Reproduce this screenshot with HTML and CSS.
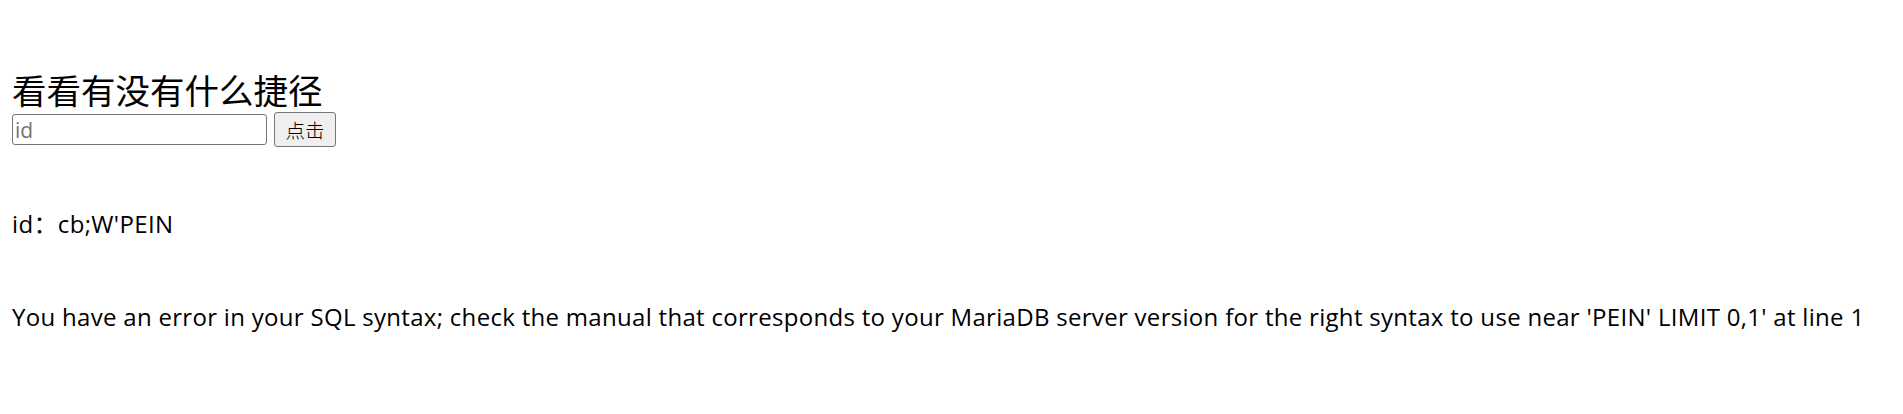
FILE: index.html
```html
<!DOCTYPE html>
<html lang="zh-CN">
<head>
<meta charset="utf-8">
<title>看看有没有什么捷径</title>
<link rel="stylesheet" href="styles.css">
</head>
<body>
<div class="page">
  <div class="title">看看有没有什么捷径</div>
  <form class="search">
    <input class="search-input" type="text" name="id" placeholder="id">
    <button class="search-btn" type="button">点击</button>
  </form>
  <p class="result">id：cb;W'PEIN</p>
  <p class="error">You have an error in your SQL syntax; check the manual that corresponds to your MariaDB server version for the right syntax to use near 'PEIN' LIMIT 0,1' at line 1</p>
</div>
</body>
</html>
```

FILE: styles.css
```css
html, body {
  margin: 0;
  padding: 0;
  background: #ffffff;
}
.page {
  padding: 69px 0 0 12px;
  font-family: "Open Sans", "Noto Sans CJK SC", sans-serif;
  color: #000;
}
.title {
  font-family: "Noto Sans CJK SC", sans-serif;
  font-size: 34.5px;
  line-height: 41px;
  height: 43px;
  white-space: nowrap;
}
.search {
  display: flex;
  align-items: center;
  gap: 7px;
  height: 35px;
  margin: 0;
}
.search-input {
  box-sizing: border-box;
  width: 255px;
  height: 31px;
  margin: 0;
  padding: 0 2px;
  border: 1px solid #767676;
  border-radius: 3px;
  font-family: "Open Sans", sans-serif;
  font-size: 21px;
  color: #000;
  background: #fff;
}
.search-input::placeholder {
  color: #757575;
}
.search-btn {
  box-sizing: border-box;
  width: 62px;
  height: 35px;
  margin: 0;
  padding: 0;
  border: 1px solid #767676;
  border-radius: 3px;
  background: #efefef;
  font-family: "Noto Sans CJK SC", sans-serif;
  font-weight: 300;
  font-size: 19.5px;
  color: #000;
}
.result {
  margin: 62px 0 0 0;
  font-size: 24px;
  letter-spacing: 0.35px;
  line-height: 30px;
  white-space: nowrap;
}
.error {
  margin: 63px 0 0 0;
  font-size: 24px;
  letter-spacing: 0.3px;
  line-height: 30px;
  white-space: nowrap;
}
```
